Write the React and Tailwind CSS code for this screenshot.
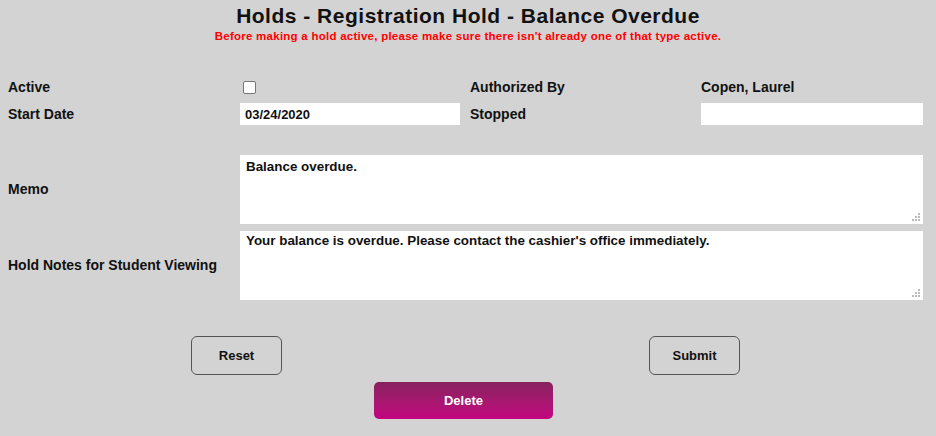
import { useState } from 'react';

function Grip() {
  return (
    <svg className="absolute right-[3px] bottom-[3px] pointer-events-none" width="8" height="8" viewBox="0 0 8 8">
      <rect x="6" y="0" width="2" height="2" fill="#bbb" />
      <rect x="3" y="3" width="2" height="2" fill="#bbb" />
      <rect x="6" y="3" width="2" height="2" fill="#bbb" />
      <rect x="0" y="6" width="2" height="2" fill="#bbb" />
      <rect x="3" y="6" width="2" height="2" fill="#bbb" />
      <rect x="6" y="6" width="2" height="2" fill="#bbb" />
    </svg>
  );
}

export default function App() {
  const [active, setActive] = useState(false);
  const [startDate, setStartDate] = useState('03/24/2020');
  const [stopped, setStopped] = useState('');
  const [memo, setMemo] = useState('Balance overdue.');
  const [notes, setNotes] = useState("Your balance is overdue. Please contact the cashier's office immediately.");

  const label = "text-[14px] font-bold text-[#111] font-['Liberation_Sans',Arial,sans-serif]";

  return (
    <div className="w-[936px] h-[436px] bg-[#d3d3d3] font-['Liberation_Sans',Arial,sans-serif] overflow-hidden">
      {/* Header */}
      <div className="pt-[4px] text-center">
        <h1 className="text-[21px] leading-[24px] font-bold text-[#111] tracking-[0.5px]">
          Holds - Registration Hold - Balance Overdue
        </h1>
        <p className="mt-[1px] text-[11.5px] leading-[14px] font-bold text-[#ff0000] tracking-[0.25px]">
          Before making a hold active, please make sure there isn't already one of that type active.
        </p>
      </div>

      {/* Top fields */}
      <div className="mt-[31px] pl-[8px] grid grid-cols-[232px_230px_231px_222px] grid-rows-[27px_26px] items-center">
        <span className={label}>Active</span>
        <div className="flex items-center">
          <input
            type="checkbox"
            checked={active}
            onChange={(e) => setActive(e.target.checked)}
            className="ml-[3px] -mt-[1px] w-[13px] h-[13px] appearance-none bg-white border border-[#767676] rounded-[2px]"
          />
        </div>
        <span className={label}>Authorized By</span>
        <span className={label}>Copen, Laurel</span>

        <span className={label}>Start Date</span>
        <input
          value={startDate}
          onChange={(e) => setStartDate(e.target.value)}
          className="w-[220px] h-[22px] bg-white px-[5px] text-[13px] font-bold text-[#111] outline-none"
        />
        <span className={label}>Stopped</span>
        <input
          value={stopped}
          onChange={(e) => setStopped(e.target.value)}
          className="w-[222px] h-[22px] bg-white px-[5px] text-[13px] font-bold text-[#111] outline-none"
        />
      </div>

      {/* Text areas */}
      <div className="mt-[28px] pl-[8px] flex flex-col gap-[7px]">
        <div className="flex items-center">
          <span className={label + ' w-[232px] shrink-0'}>Memo</span>
          <div className="relative">
            <textarea
              value={memo}
              onChange={(e) => setMemo(e.target.value)}
              className="block w-[683px] h-[69px] bg-white px-[6px] py-[2px] text-[13.4px] font-bold text-[#111] outline-none resize-none"
            />
            <Grip />
          </div>
        </div>
        <div className="flex items-center">
          <span className={label + ' w-[232px] shrink-0'}>Hold Notes for Student Viewing</span>
          <div className="relative">
            <textarea
              value={notes}
              onChange={(e) => setNotes(e.target.value)}
              className="block w-[683px] h-[69px] bg-white px-[6px] py-0 text-[13.4px] font-bold text-[#111] outline-none resize-none"
            />
            <Grip />
          </div>
        </div>
      </div>

      {/* Buttons */}
      <div className="mt-[36px] flex">
        <button className="ml-[191px] w-[91px] h-[39px] border border-[#555] rounded-[6px] text-[13px] font-bold text-[#111] bg-transparent">
          Reset
        </button>
        <button className="ml-[367px] w-[91px] h-[39px] border border-[#555] rounded-[6px] text-[13px] font-bold text-[#111] bg-transparent">
          Submit
        </button>
      </div>
      <div className="mt-[7px] flex">
        <button className="ml-[374px] w-[179px] h-[37px] rounded-[5px] bg-gradient-to-b from-[#87205f] to-[#c4007f] text-[13px] font-bold text-white">
          Delete
        </button>
      </div>
    </div>
  );
}
